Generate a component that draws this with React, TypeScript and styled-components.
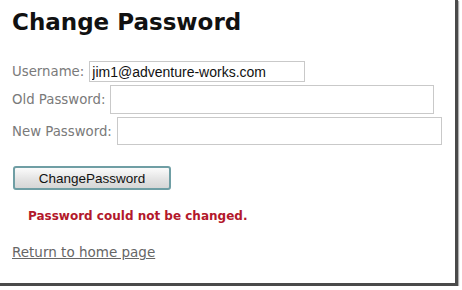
import styled, { createGlobalStyle } from "styled-components";

const GlobalStyle = createGlobalStyle`
  html, body {
    margin: 0;
    padding: 0;
    background: #ffffff;
  }
`;

const Frame = styled.div`
  width: 458px;
  height: 286px;
  box-sizing: border-box;
  background: #ffffff;
  border-right: 3px solid #4a4a4a;
  border-bottom: 3px solid #4a4a4a;
  box-shadow: 1px 1px 1px #b0b0b0;
  padding: 8px 0 0 12px;
  font-family: "DejaVu Sans", Verdana, sans-serif;
`;

const Title = styled.h1`
  margin: 0 0 25px 0;
  font-size: 23px;
  line-height: 28px;
  font-weight: bold;
  color: #111111;
`;

const Form = styled.div`
  display: flex;
  flex-direction: column;
  gap: 3px;
`;

const Row = styled.div`
  display: flex;
  align-items: center;
  gap: 5px;
`;

const Label = styled.label`
  font-size: 13.3px;
  color: #7a7a7a;
`;

const Input = styled.input<{ w: number; h: number }>`
  width: ${(p) => p.w}px;
  height: ${(p) => p.h}px;
  box-sizing: border-box;
  border: 1px solid #c9c9c9;
  padding: 0 2px;
  font-family: "Liberation Sans", Arial, sans-serif;
  font-size: 14px;
  color: #111111;
  outline: none;
`;

const Button = styled.button`
  margin: 21px 0 0 1px;
  width: 158px;
  height: 24px;
  border: 2px solid #6f9ea4;
  border-radius: 3px;
  background: linear-gradient(#fbfbfb, #e4e4e4 55%, #d6d6d6);
  font-family: "Liberation Sans", Arial, sans-serif;
  font-size: 13.5px;
  color: #111111;
  padding: 0;
`;

const ErrorText = styled.div`
  margin: 19px 0 0 16px;
  font-size: 12px;
  font-weight: bold;
  color: #b3182b;
`;

const Link = styled.a`
  display: inline-block;
  margin-top: 21px;
  font-size: 13.5px;
  color: #666666;
  text-decoration: underline;
`;

export default function App() {
  return (
    <>
      <GlobalStyle />
      <Frame>
        <Title>Change Password</Title>
        <Form>
          <Row>
            <Label>Username:</Label>
            <Input w={216} h={21} defaultValue="jim1@adventure-works.com" />
          </Row>
          <Row>
            <Label>Old Password:</Label>
            <Input w={324} h={29} type="password" />
          </Row>
          <Row>
            <Label>New Password:</Label>
            <Input w={325} h={28} type="password" />
          </Row>
        </Form>
        <Button>ChangePassword</Button>
        <ErrorText>Password could not be changed.</ErrorText>
        <Link href="#">Return to home page</Link>
      </Frame>
    </>
  );
}
